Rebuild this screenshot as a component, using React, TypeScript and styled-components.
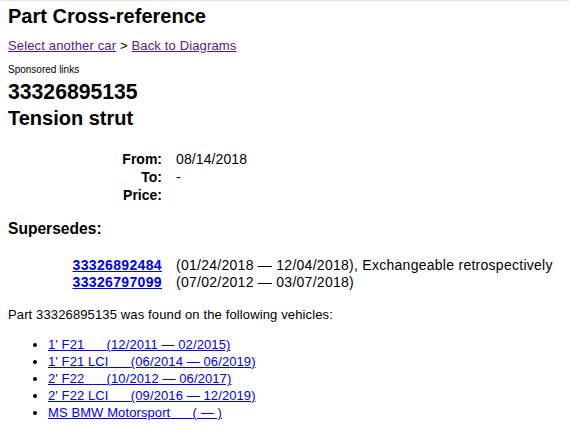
import React from "react";
import styled, { createGlobalStyle } from "styled-components";

const GlobalStyle = createGlobalStyle`
  html, body {
    margin: 0;
    padding: 0;
    background: #ffffff;
  }
  body {
    font-family: "Liberation Sans", Arial, sans-serif;
    color: #000000;
    font-size: 13px;
  }
`;

const Page = styled.div`
  border-top: 1px solid #e2e2e2;
  padding: 0 8px;
`;

const Title = styled.h1`
  margin: 4px 0 0;
  font-size: 20px;
  line-height: 23px;
  font-weight: bold;
`;

const Nav = styled.div`
  margin-top: 10px;
  font-size: 13px;
  line-height: 15px;
  letter-spacing: 0.15px;
`;

const NavLink = styled.a`
  color: #551a8b;
  text-decoration: underline;
`;

const Sponsored = styled.div`
  margin-top: 11px;
  font-size: 10px;
  line-height: 12px;
`;

const PartNumber = styled.h2`
  margin: 4px 0 0;
  font-size: 21.2px;
  line-height: 24px;
  font-weight: bold;
`;

const PartName = styled.h2`
  margin: 3px 0 0;
  font-size: 20px;
  line-height: 23px;
  font-weight: bold;
`;

const InfoGrid = styled.div<{ $top: number; $row: number }>`
  display: grid;
  grid-template-columns: 154px auto;
  column-gap: 14px;
  grid-auto-rows: ${(p) => p.$row}px;
  margin-top: ${(p) => p.$top}px;
  font-size: 14px;
  line-height: ${(p) => p.$row}px;
`;

const Label = styled.div`
  text-align: right;
  font-weight: bold;
`;

const Value = styled.div<{ $spacing?: number }>`
  white-space: nowrap;
  letter-spacing: ${(p) => p.$spacing ?? 0.1}px;
`;

const Section = styled.h3`
  margin: 16px 0 0;
  font-size: 15.6px;
  line-height: 18px;
  font-weight: bold;
`;

const PartLink = styled.a`
  justify-self: end;
  color: #0000ee;
  font-weight: bold;
  letter-spacing: 0.35px;
  text-decoration: underline;
`;

const FoundText = styled.p`
  margin: 16px 0 0;
  font-size: 13px;
  line-height: 15px;
  letter-spacing: 0.13px;
`;

const VehicleList = styled.ul`
  margin: 14px 0 0;
  padding-left: 40px;
  list-style: disc;
`;

const VehicleItem = styled.li`
  font-size: 13px;
  line-height: 17px;
  letter-spacing: 0.1px;
`;

const VehicleLink = styled.a`
  color: #0000ee;
  text-decoration: underline;
`;

const sp = "\u00a0\u00a0\u00a0\u00a0\u00a0\u00a0";

const info = [
  { label: "From:", value: "08/14/2018" },
  { label: "To:", value: "-" },
  { label: "Price:", value: "" },
];

const supersedes = [
  {
    part: "33326892484",
    text: "(01/24/2018 \u2014 12/04/2018), Exchangeable retrospectively",
  },
  { part: "33326797099", text: "(07/02/2012 \u2014 03/07/2018)" },
];

const vehicles = [
  { name: "1' F21", range: "(12/2011 \u2014 02/2015)" },
  { name: "1' F21 LCI", range: "(06/2014 \u2014 06/2019)" },
  { name: "2' F22", range: "(10/2012 \u2014 06/2017)" },
  { name: "2' F22 LCI", range: "(09/2016 \u2014 12/2019)" },
  { name: "MS BMW Motorsport", range: "( \u2014 )" },
];

export default function App() {
  return (
    <>
      <GlobalStyle />
      <Page>
        <Title>Part Cross-reference</Title>
        <Nav>
          <NavLink href="#">Select another car</NavLink> &gt;{" "}
          <NavLink href="#">Back to Diagrams</NavLink>
        </Nav>
        <Sponsored>Sponsored links</Sponsored>
        <PartNumber>33326895135</PartNumber>
        <PartName>Tension strut</PartName>
        <InfoGrid $top={20} $row={18}>
          {info.map((r) => (
            <React.Fragment key={r.label}>
              <Label>{r.label}</Label>
              <Value>{r.value}</Value>
            </React.Fragment>
          ))}
        </InfoGrid>
        <Section>Supersedes:</Section>
        <InfoGrid $top={19} $row={17}>
          {supersedes.map((r) => (
            <React.Fragment key={r.part}>
              <PartLink href="#">{r.part}</PartLink>
              <Value $spacing={0.27}>{r.text}</Value>
            </React.Fragment>
          ))}
        </InfoGrid>
        <FoundText>
          Part 33326895135 was found on the following vehicles:
        </FoundText>
        <VehicleList>
          {vehicles.map((v) => (
            <VehicleItem key={v.name}>
              <VehicleLink href="#">
                {v.name}
                {sp}
                {v.range}
              </VehicleLink>
            </VehicleItem>
          ))}
        </VehicleList>
      </Page>
    </>
  );
}
